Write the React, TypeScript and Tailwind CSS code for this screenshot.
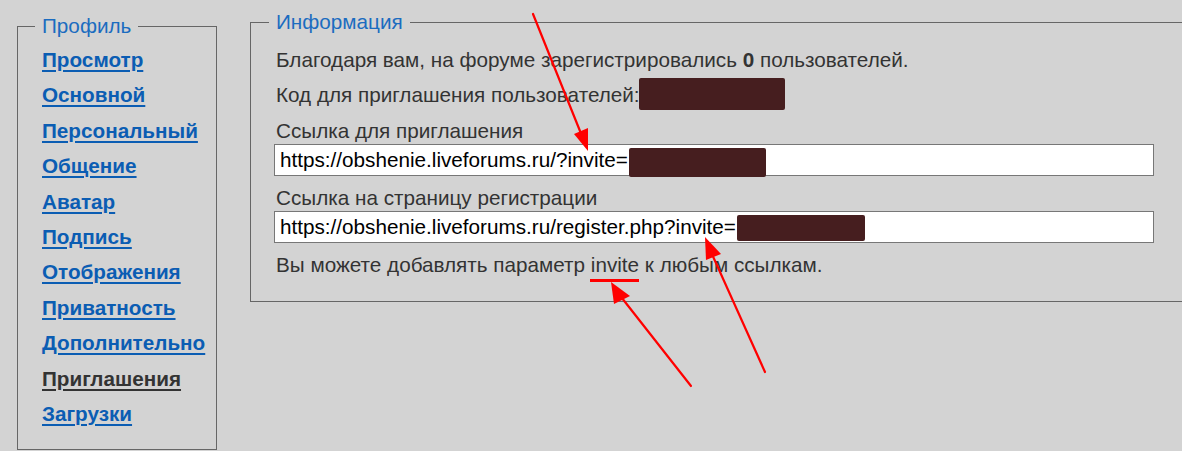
const links = [
  { label: "Просмотр" },
  { label: "Основной" },
  { label: "Персональный" },
  { label: "Общение" },
  { label: "Аватар" },
  { label: "Подпись" },
  { label: "Отображения" },
  { label: "Приватность" },
  { label: "Дополнительно" },
  { label: "Приглашения", active: true },
  { label: "Загрузки" },
];

function Redacted({ className }: { className: string }) {
  return <span className={`inline-block shrink-0 rounded-[2px] bg-[#461e1f] ${className}`} />;
}

function Arrows() {
  return (
    <svg
      className="pointer-events-none absolute inset-0"
      width="1182"
      height="451"
      viewBox="0 0 1182 451"
      fill="none"
    >
      <g stroke="#ff0000" strokeWidth="2.2" strokeLinecap="round">
        <line x1="533" y1="14" x2="582" y2="136" />
        <line x1="691" y1="386" x2="618" y2="293" />
        <line x1="765" y1="372" x2="711" y2="252" />
      </g>
      <g fill="#ff0000">
        <polygon points="588,151 574,134 588,128" />
        <polygon points="611,282 614,304 630,296" />
        <polygon points="705,237 706,260 721,254" />
        <rect x="590" y="279" width="49" height="3" />
      </g>
    </svg>
  );
}

export default function App() {
  return (
    <div className="relative h-[451px] w-full overflow-hidden bg-[#d3d3d3] font-['Liberation_Sans',Arial,sans-serif] text-[20.7px] text-[#333]">
      <div className="flex items-start gap-[33px] pl-[17px]">
        <fieldset className="mt-[14px] w-[200px] shrink-0 border border-[#666]">
          <legend className="ml-[17px] px-[7px] leading-[24px] text-[#1b6cc0]">Профиль</legend>
          <nav className="pb-[18px] pl-[24px] pt-[4px]">
            {links.map((item) => (
              <a
                key={item.label}
                href="#"
                className={`block whitespace-nowrap font-bold leading-[35.4px] underline decoration-2 underline-offset-[3px] ${
                  item.active ? "text-[#333]" : "text-[#0b5db3]"
                }`}
              >
                {item.label}
              </a>
            ))}
          </nav>
        </fieldset>

        <fieldset className="mt-[10px] -mr-[40px] flex-1 border border-[#666]">
          <legend className="ml-[18px] px-[7px] leading-[24px] text-[#1b6cc0]">Информация</legend>
          <div className="pb-[24px] pl-[23px] pt-[14px]">
            <p className="pl-[2px] leading-[24px]">
              Благодаря вам, на форуме зарегистрировались <b>0</b> пользователей.
            </p>
            <div className="mt-[11px] flex h-[24px] items-center pl-[2px] leading-[24px]">
              <span>Код для приглашения пользователей:</span>
              <Redacted className="-ml-px mt-[-2px] h-[32px] w-[146px]" />
            </div>
            <p className="mt-[12px] pl-[2px] leading-[24px]">Ссылка для приглашения</p>
            <div className="mt-px flex h-[32px] w-[880px] items-center border border-[#777] bg-white pl-[5px] text-black">
              <span className="whitespace-nowrap">https://obshenie.liveforums.ru/?invite=</span>
              <Redacted className="ml-px mt-[5px] h-[29px] w-[137px]" />
            </div>
            <p className="mt-[10px] pl-[2px] leading-[24px]">Ссылка на страницу регистрации</p>
            <div className="mt-px flex h-[32px] w-[880px] items-center border border-[#777] bg-white pl-[5px] text-black">
              <span className="whitespace-nowrap">https://obshenie.liveforums.ru/register.php?invite=</span>
              <Redacted className="ml-px mt-[1px] h-[26px] w-[128px]" />
            </div>
            <p className="mt-[10px] pl-[2px] leading-[24px]">
              Вы можете добавлять параметр invite к любым ссылкам.
            </p>
          </div>
        </fieldset>
      </div>
      <Arrows />
    </div>
  );
}
